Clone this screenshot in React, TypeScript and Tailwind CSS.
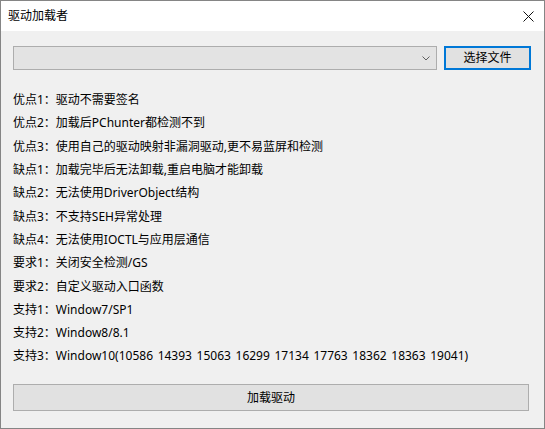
import React from "react";

const lines: string[] = [
  "优点1：驱动不需要签名",
  "优点2：加载后PChunter都检测不到",
  "优点3：使用自己的驱动映射非漏洞驱动,更不易蓝屏和检测",
  "缺点1：加载完毕后无法卸载,重启电脑才能卸载",
  "缺点2：无法使用DriverObject结构",
  "缺点3：不支持SEH异常处理",
  "缺点4：无法使用IOCTL与应用层通信",
  "要求1：关闭安全检测/GS",
  "要求2：自定义驱动入口函数",
  "支持1：Window7/SP1",
  "支持2：Window8/8.1",
  "支持3：Window10(10586 14393 15063 16299 17134 17763 18362 18363 19041)",
];

const font = "font-['Noto_Sans','Noto_Sans_CJK_SC',sans-serif]";

export default function App() {
  return (
    <div
      className={`w-[545px] h-[429px] border border-[#858585] bg-[#f0f0f0] flex flex-col text-black ${font}`}
    >
      <div className="h-[30px] bg-white flex items-center justify-between pl-[7px] pr-[10px]">
        <span className="text-[12px] leading-none">驱动加载者</span>
        <svg width="11" height="11" viewBox="0 0 11 11">
          <path d="M0.5 0.5 L10.5 10.5 M10.5 0.5 L0.5 10.5" stroke="#111" strokeWidth="1" />
        </svg>
      </div>

      <div className="flex flex-col pl-[12px] pr-[13px] pt-[15px]">
        <div className="flex gap-[7px] h-[24px]">
          <div className="w-[424px] h-full bg-[#e3e3e3] border border-[#adadad] flex items-center justify-end pr-[6px]">
            <svg width="8" height="5" viewBox="0 0 8 5">
              <path d="M0.5 0.5 L4 4 L7.5 0.5" stroke="#606060" strokeWidth="1" fill="none" />
            </svg>
          </div>
          <button className="w-[87px] h-full bg-[#e1e1e1] border-2 border-[#0078d7] text-[12px] flex items-center justify-center">
            选择文件
          </button>
        </div>

        <div className="flex flex-col pt-[18.5px] pb-[16.4px]">
          {lines.map((line, i) => (
            <div
              key={i}
              className="h-[23.3px] flex items-center text-[12px] whitespace-nowrap [word-spacing:1.5px]"
            >
              {line}
            </div>
          ))}
        </div>

        <button className="w-[516px] h-[27px] bg-[#e1e1e1] border border-[#adadad] text-[12px] flex items-center justify-center">
          加载驱动
        </button>
      </div>
    </div>
  );
}
